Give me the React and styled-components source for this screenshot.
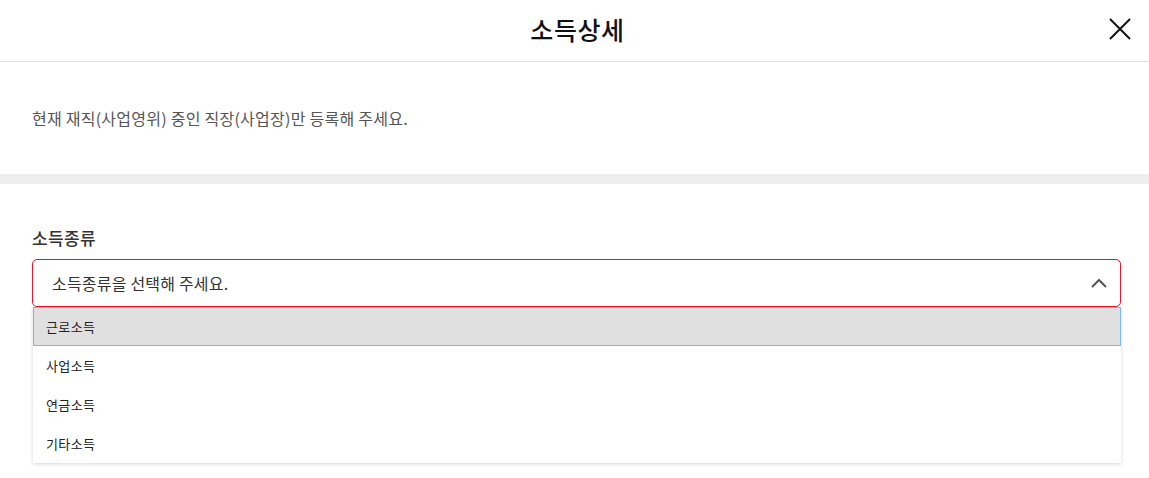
import React from 'react';
import styled, { createGlobalStyle } from 'styled-components';

const GlobalStyle = createGlobalStyle`
  html, body {
    margin: 0;
    padding: 0;
    background: #fff;
  }
  body {
    font-family: "Malgun Gothic", "Noto Sans CJK KR", "Noto Sans", sans-serif;
    color: #333;
  }
  * { box-sizing: border-box; }
`;

const Page = styled.div`
  width: 1149px;
  min-height: 478px;
  background: #fff;
`;

const Header = styled.header`
  height: 62px;
  border-bottom: 1px solid #e0e0e0;
  display: grid;
  grid-template-columns: 1fr auto 1fr;
  align-items: center;
  padding: 0 17px 0 23px;
`;

const Title = styled.h1`
  grid-column: 2;
  margin: 0;
  font-size: 25px;
  font-weight: 500;
  color: #111;
  line-height: 30px;
  padding-bottom: 4px;
  letter-spacing: 0.6px;
`;

const CloseButton = styled.button`
  grid-column: 3;
  justify-self: end;
  width: 24px;
  height: 24px;
  padding: 0;
  border: none;
  background: none;
  display: flex;
  align-items: center;
  justify-content: center;
  cursor: pointer;
  margin-bottom: 4px;
`;

const Notice = styled.p`
  margin: 0;
  height: 112px;
  display: flex;
  align-items: center;
  padding: 0 32px;
  font-size: 16px;
  color: #555;
  letter-spacing: 0.25px;
`;

const Divider = styled.div`
  height: 10px;
  background: #eeeeee;
`;

const Section = styled.section`
  padding: 44px 28px 0 32px;
`;

const Label = styled.div`
  font-size: 17px;
  font-weight: 500;
  color: #333;
  line-height: 20px;
  margin-bottom: 11px;
  letter-spacing: 0.4px;
`;

const SelectWrap = styled.div`
  position: relative;
`;

const SelectBox = styled.div`
  height: 48px;
  border: 1px solid ${p => (p.$error ? '#e5162f' : '#ccc')};
  border-radius: 5px;
  display: flex;
  align-items: center;
  justify-content: space-between;
  padding: 0 12px 0 19px;
  font-size: 16px;
  color: #333;
  letter-spacing: 0.2px;
  cursor: pointer;
`;

const Menu = styled.ul`
  position: absolute;
  top: 48px;
  left: 1px;
  right: 0;
  margin: 0;
  padding: 0;
  list-style: none;
  background: #fff;
  box-shadow: 0 1px 4px rgba(0, 0, 0, 0.16);
`;

const Option = styled.li`
  height: 39px;
  display: flex;
  align-items: center;
  padding-left: 13px;
  font-size: 13px;
  color: #222;
  letter-spacing: 0.4px;
  background: ${p => (p.$active ? '#e0e0e0' : '#fff')};
  box-shadow: ${p => (p.$active ? 'inset 0 0 0 1px #7ab8f5' : 'none')};
  cursor: pointer;
`;

const options = ['근로소득', '사업소득', '연금소득', '기타소득'];

export default function App() {
  return (
    <Page>
      <GlobalStyle />
      <Header>
        <Title>소득상세</Title>
        <CloseButton aria-label="닫기">
          <svg width="24" height="24" viewBox="0 0 24 24">
            <path d="M2 2 L22 22 M22 2 L2 22" stroke="#111" strokeWidth="2" fill="none" />
          </svg>
        </CloseButton>
      </Header>

      <Notice>현재 재직(사업영위) 중인 직장(사업장)만 등록해 주세요.</Notice>
      <Divider />

      <Section>
        <Label>소득종류</Label>
        <SelectWrap>
          <SelectBox $error>
            <span>소득종류을 선택해 주세요.</span>
            <svg width="18" height="12" viewBox="0 0 18 12">
              <path d="M2 10 L9 3 L16 10" stroke="#555" strokeWidth="2" fill="none" />
            </svg>
          </SelectBox>
          <Menu>
            {options.map((o, i) => (
              <Option key={o} $active={i === 0}>{o}</Option>
            ))}
          </Menu>
        </SelectWrap>
      </Section>
    </Page>
  );
}
